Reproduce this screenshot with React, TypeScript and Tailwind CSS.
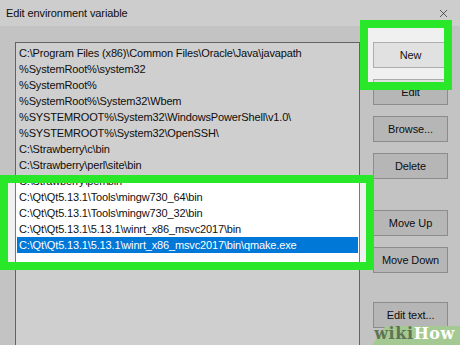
import { X } from "lucide-react";

const paths = [
  "C:\\Program Files (x86)\\Common Files\\Oracle\\Java\\javapath",
  "%SystemRoot%\\system32",
  "%SystemRoot%",
  "%SystemRoot%\\System32\\Wbem",
  "%SYSTEMROOT%\\System32\\WindowsPowerShell\\v1.0\\",
  "%SYSTEMROOT%\\System32\\OpenSSH\\",
  "C:\\Strawberry\\c\\bin",
  "C:\\Strawberry\\perl\\site\\bin",
  "C:\\Strawberry\\perl\\bin",
  "C:\\Qt\\Qt5.13.1\\Tools\\mingw730_64\\bin",
  "C:\\Qt\\Qt5.13.1\\Tools\\mingw730_32\\bin",
  "C:\\Qt\\Qt5.13.1\\5.13.1\\winrt_x86_msvc2017\\bin",
  "C:\\Qt\\Qt5.13.1\\5.13.1\\winrt_x86_msvc2017\\bin\\qmake.exe",
];

function Btn({ label }: { label: string }) {
  return (
    <div className="h-[26px] w-[75px] bg-[#e1e1e1] border border-[#adadad] flex items-center justify-center text-[11px] text-[#111]">
      {label}
    </div>
  );
}

export default function App() {
  return (
    <div
      className="relative w-[460px] h-[345px] overflow-hidden bg-[#f0f0f0] text-black tracking-[-0.1px]"
      style={{ fontFamily: '"Liberation Sans", Arial, sans-serif' }}
    >
      {/* title bar */}
      <div className="h-[26px] bg-[#fdfdfd] flex items-center justify-between pl-[6px] pr-[10px]">
        <span className="text-[11px] text-[#111]">Edit environment variable</span>
        <X size={13} strokeWidth={1.2} className="text-[#222]" />
      </div>

      {/* body */}
      <div className="flex pt-[16px] pl-[15px] gap-[13px]">
        <div className="w-[345px] h-[320px] bg-white border border-[#7a7a7a] pt-[2px] px-[1px]">
          {paths.map((p, i) => (
            <div
              key={i}
              className={
                "h-[16px] leading-[16px] pl-[2px] text-[11px] tracking-[-0.15px] whitespace-nowrap " +
                (i === paths.length - 1 ? "bg-[#0078d7] text-white" : "text-[#111]")
              }
            >
              {p}
            </div>
          ))}
        </div>

        <div className="flex flex-col">
          <div className="flex flex-col gap-[11px]">
            <Btn label="New" />
            <Btn label="Edit" />
            <Btn label="Browse..." />
            <Btn label="Delete" />
          </div>
          <div className="flex flex-col gap-[11px] mt-[31px]">
            <Btn label="Move Up" />
            <Btn label="Move Down" />
          </div>
          <div className="mt-[29px]">
            <Btn label="Edit text..." />
          </div>
        </div>
      </div>

      {/* dimming mask with two holes */}
      <svg className="absolute inset-0 pointer-events-none" width="460" height="345">
        <path
          fillRule="evenodd"
          fill="rgba(0,0,0,0.19)"
          d="M0 0H460V345H0Z M360 20V90H452V20Z M0 175V270H374V175Z"
        />
      </svg>

      {/* green highlight frames */}
      <div className="absolute left-[360px] top-[20px] w-[92px] h-[70px] border-8 border-[#29e829]" />
      <div className="absolute left-0 top-[175px] w-[374px] h-[95px] border-8 border-[#29e829]" />

      {/* wikiHow watermark */}
      <svg className="absolute right-0 bottom-0" width="88" height="19" viewBox="0 0 88 19">
        <path d="M0 19 L11 3 Q13 0 17 0 H88 V19 Z" fill="#a5c993" />
      </svg>
      <div
        className="absolute right-[5px] bottom-[3px] text-[16px] font-bold leading-none tracking-[0.6px]"
        style={{ fontFamily: '"DejaVu Serif", serif' }}
      >
        <span className="text-[#607352]">wiki</span>
        <span className="text-white">How</span>
      </div>
    </div>
  );
}
